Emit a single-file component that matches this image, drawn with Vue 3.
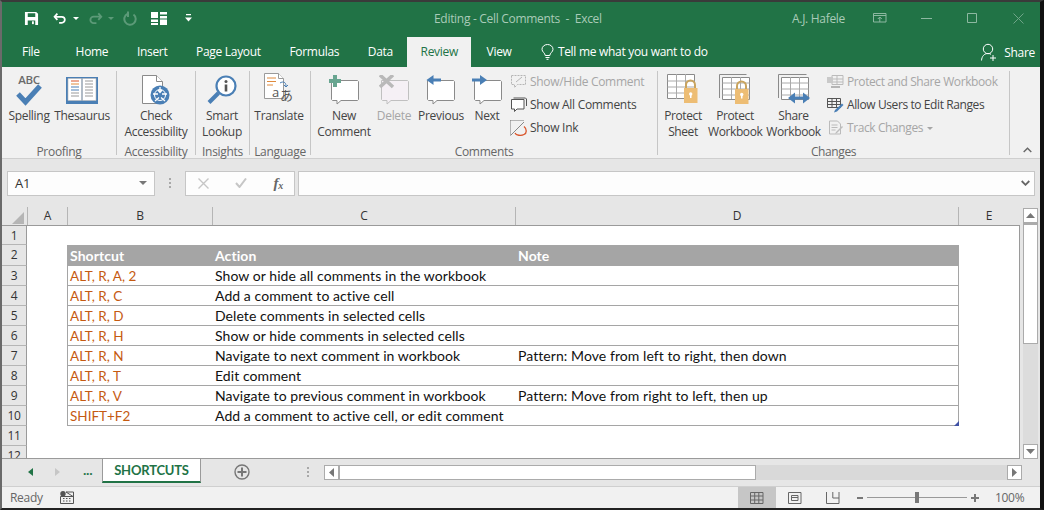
<script setup>
const columns = [
  { name: 'A', width: 40 },
  { name: 'B', width: 145 },
  { name: 'C', width: 303 },
  { name: 'D', width: 443 },
  { name: 'E', width: 61 },
]

const shortcuts = [
  { keys: 'ALT, R, A, 2', action: 'Show or hide all comments in the workbook', note: '' },
  { keys: 'ALT, R, C', action: 'Add a comment to active cell', note: '' },
  { keys: 'ALT, R, D', action: 'Delete comments in selected cells', note: '' },
  { keys: 'ALT, R, H', action: 'Show or hide comments in selected cells', note: '' },
  { keys: 'ALT, R, N', action: 'Navigate to next comment in workbook', note: 'Pattern: Move from left to right, then down' },
  { keys: 'ALT, R, T', action: 'Edit comment', note: '' },
  { keys: 'ALT, R, V', action: 'Navigate to previous comment in workbook', note: 'Pattern: Move from right to left, then up' },
  { keys: 'SHIFT+F2', action: 'Add a comment to active cell, or edit comment', note: '' },
]

const tabs = ['Home', 'Insert', 'Page Layout', 'Formulas', 'Data', 'Review', 'View']
</script>

<template>
  <div class="window">
    <header class="titlebar">
      <div class="qat">
        <svg class="q-save" width="15" height="15" viewBox="0 0 16 16"><path d="M1 1h12l2 2v12H1z" fill="#fff"/><path d="M4 2.500h8v4H4zM4 10h8v5H4z" fill="#217346"/><path d="M8.500 11h2v3h-2z" fill="#fff"/></svg>
        <svg class="q-undo" width="14" height="13" viewBox="0 0 16 14"><path d="M5 1.500 1.800 5 5 8.500" fill="none" stroke="#fff" stroke-width="2"/><path d="M2.500 5H10a3.500 3.500 0 0 1 0 7H7" fill="none" stroke="#fff" stroke-width="2"/></svg>
        <svg class="q-drop" width="6" height="3" viewBox="0 0 6 3"><path d="M0 0h6L3 3z" fill="#fff"/></svg>
        <svg class="q-redo" width="15" height="13" viewBox="0 0 16 14"><path d="M11 1.500 14.200 5 11 8.500M13.500 5H6a3.500 3.500 0 0 0 0 7h3" fill="none" stroke="#5c9a78" stroke-width="2"/></svg>
        <svg class="q-drop2" width="6" height="3" viewBox="0 0 6 3"><path d="M0 0h6L3 3z" fill="#5c9a78"/></svg>
        <svg class="q-repeat" width="14" height="15" viewBox="0 0 14 15"><path d="M10.500 3.500a5.700 5.700 0 1 1-6 -.6" fill="none" stroke="#5c9a78" stroke-width="2"/><path d="M4 .5v5.500h2V.5z" fill="#5c9a78"/></svg>
        <svg class="q-layout" width="16" height="13" viewBox="0 0 16 13"><path d="M0 0h7v6H0zM9 0h7v2.500H9zM9 4h7v2.500H9zM0 7.500h7V10H0zM0 11h7v2H0zM9 7.500h7V13H9z" fill="#fff"/></svg>
        <svg class="q-more" width="7" height="8" viewBox="0 0 7 8"><path d="M1 0h5v1.300H1zM0 3.500h7L3.500 7.500z" fill="#fff"/></svg>
      </div>
      <div class="doc-title">Editing - Cell Comments&nbsp; -&nbsp; Excel</div>
      <div class="user">A.J. Hafele</div>
      <div class="win-btns">
        <svg width="14" height="10" viewBox="0 0 14 10"><path d="M.5.500h12.500v8.500H.5zM.5 2.500h12.500M6.800 9V4M4.800 6l2-2 2 2" fill="none" stroke="#8db8a1"/></svg>
        <svg class="wb-min" width="11" height="1" viewBox="0 0 11 1"><path d="M0 0h11v1H0z" fill="#8db8a1"/></svg>
        <svg class="wb-max" width="10" height="10" viewBox="0 0 10 10"><path d="M.5.500h9v9h-9z" fill="none" stroke="#8db8a1"/></svg>
        <svg class="wb-close" width="11" height="11" viewBox="0 0 11 11"><path d="m.5.500 10 10M10.500.5l-10 10" fill="none" stroke="#6fa588"/></svg>
      </div>
    </header>

    <nav class="tabbar">
      <span class="tab file">File</span>
      <span v-for="t in tabs" :key="t" class="tab" :class="{ active: t === 'Review' }">{{ t }}</span>
      <svg class="bulb" width="13" height="16" viewBox="0 0 13 16"><path d="M4.200 11.500c0-2.500-3.200-3.500-3.200-6.200a5.500 4.800 0 0 1 11 0c0 2.700-3.200 3.700-3.200 6.200zM4.500 13.500h4M5.500 15.300h2" fill="none" stroke="#fff"/></svg>
      <span class="tell">Tell me what you want to do</span>
      <div class="share">
        <svg width="16" height="19" viewBox="0 0 16 19"><circle cx="7" cy="6" r="4.700" fill="none" stroke="#fff"/><path d="M.5 17.500c.3-4 2.500-7 6.500-7 1.300 0 2.300.3 3 .8M12 12v6M9 15h6" fill="none" stroke="#fff"/></svg>
        <span>Share</span>
      </div>
    </nav>

    <section class="ribbon">
      <div class="group" style="width: 115px">
        <div class="group-body">
          <div class="big" style="width: 48px; margin-left: 3px">
            <div class="icon">
              <svg width="30" height="35" viewBox="0 0 30 35"><text x="15" y="12" text-anchor="middle" font-family="Open Sans, sans-serif" font-size="11.500" font-weight="600" fill="#6a6a6a">ABC</text><path d="m4 22 7.500 8L26 14" fill="none" stroke="#4a7fb5" stroke-width="5"/></svg>
            </div>
            <span>Spelling</span>
          </div>
          <div class="big" style="width: 58px">
            <div class="icon">
              <svg width="32" height="28" viewBox="0 0 32 28"><path d="M0 1h32v27H0z" fill="#4a7fb5"/><path d="M2 2.500h13.500v22H2zM16.500 2.500H30v22H16.500z" fill="#fff" stroke="#b9b9b9" stroke-width=".6"/><path d="M5 5h8" stroke="#d9552b"/><path d="M5 8h8" stroke="#e08a3c"/><path d="M5 11h8" stroke="#4a7fb5"/><path d="M5 14h8" stroke="#4a7fb5"/><path d="M5 17h8M5 20h8M19 5h8M19 8h8M19 11h8M19 14h8M19 17h8M19 20h8" stroke="#9a9a9a"/></svg>
            </div>
            <span>Thesaurus</span>
          </div>
        </div>
        <div class="group-label">Proofing</div>
      </div>

      <div class="group" style="width: 79px">
        <div class="group-body">
          <div class="big" style="width: 70px; margin-left: 4px">
            <div class="icon">
              <svg width="28" height="30" viewBox="0 0 28 30"><path d="M.5.500h14l6 6v22H.5z" fill="#fff" stroke="#8a8a8a"/><path d="M14.500.5v6h6" fill="#fff" stroke="#8a8a8a"/><circle cx="18" cy="20" r="9.500" fill="#4a7fb5"/><circle cx="18" cy="20" r="5.500" fill="none" stroke="#fff"/><path d="M18 12v5M16 15l2 2.500L20 15M11 19h5M25 19h-5M13 26l4-3.500M23 26l-4-3.500" fill="none" stroke="#fff" stroke-width="1.300"/></svg>
            </div>
            <span>Check<br>Accessibility</span>
          </div>
        </div>
        <div class="group-label">Accessibility</div>
      </div>

      <div class="group" style="width: 54px">
        <div class="group-body">
          <div class="big" style="width: 52px">
            <div class="icon">
              <svg width="30" height="30" viewBox="0 0 30 30"><circle cx="19" cy="11" r="9.500" fill="#fff" stroke="#4a7fb5" stroke-width="2.200"/><path d="m11.500 18-9.500 9.500" stroke="#4a7fb5" stroke-width="4" fill="none"/><circle cx="19" cy="6.500" r="1.500" fill="#555"/><path d="M17.700 9.500h2.600v7h-2.600z" fill="#555"/></svg>
            </div>
            <span>Smart<br>Lookup</span>
          </div>
        </div>
        <div class="group-label">Insights</div>
      </div>

      <div class="group" style="width: 61px">
        <div class="group-body">
          <div class="big" style="width: 58px">
            <div class="icon">
              <svg width="31" height="34" viewBox="0 0 31 34"><path d="M.5.500h14l5 5v20H.5z" fill="#fff" stroke="#9a9a9a"/><path d="M14.500.5v5h5" fill="#fff" stroke="#9a9a9a"/><path d="M3 5h9M3 8.500h9" stroke="#e08a3c"/><path d="M3 12h6" stroke="#e08a3c"/><path d="M16 10c3-2 6-1 6 3m-2-1 2 2 2-2" fill="none" stroke="#4a7fb5"/><text x="8" y="24" font-family="Open Sans, sans-serif" font-size="13" fill="#555">a</text><text x="16" y="27" font-family="Noto Sans CJK JP, sans-serif" font-size="13" fill="#555">あ</text></svg>
            </div>
            <span>Translate</span>
          </div>
        </div>
        <div class="group-label">Language</div>
      </div>

      <div class="group" style="width: 347px">
        <div class="group-body">
          <div class="big" style="width: 58px; margin-left: 4px">
            <div class="icon">
              <svg width="30" height="30" viewBox="0 0 30 30"><path d="M2.500 5.500h26l1 1v18l-1 1H12l-4 3.500v-3.500H3.500l-1-1z" fill="#fff" stroke="#8a8a8a"/><path d="M4 0h4v4h4v4H8v4H4V8H0V4h4z" fill="#68a590"/></svg>
            </div>
            <span>New<br>Comment</span>
          </div>
          <div class="big" style="width: 42px">
            <div class="icon">
              <svg width="31" height="30" viewBox="0 0 31 30"><path d="M2.500 5.500h26l1 1v18l-1 1H12l-4 3.500v-3.500H3.500l-1-1z" fill="#f5f0f5" stroke="#c0c0c0"/><path d="m1 0 13 12M14 0 1 12" stroke="#b9b9b9" stroke-width="3.500"/></svg>
            </div>
            <span class="off">Delete</span>
          </div>
          <div class="big" style="width: 52px">
            <div class="icon">
              <svg width="30" height="30" viewBox="0 0 30 30"><path d="M1.500 5.500h26l1 1v18l-1 1H11l-4 3.500v-3.500H2.500l-1-1z" fill="#fff" stroke="#8a8a8a"/><path d="M15 5H6" stroke="#4a7fb5" stroke-width="3"/><path d="m7.500 0-7 5 7 5z" fill="#4a7fb5"/></svg>
            </div>
            <span>Previous</span>
          </div>
          <div class="big" style="width: 40px">
            <div class="icon">
              <svg width="31" height="30" viewBox="0 0 31 30"><path d="M2.500 5.500h26l1 1v18l-1 1H12l-4 3.500v-3.500H3.500l-1-1z" fill="#fff" stroke="#8a8a8a"/><path d="M0 5h10" stroke="#4a7fb5" stroke-width="3"/><path d="m8 0 7 5-7 5z" fill="#4a7fb5"/></svg>
            </div>
            <span>Next</span>
          </div>
          <div class="smalls" style="margin-left: 3px">
            <div class="small off">
              <svg width="17" height="16" viewBox="0 0 17 16"><path d="M1.500 1.500h14v9h-8l-3 3v-3h-3z" fill="none" stroke="#b5b5b5" stroke-dasharray="2 1"/><path d="m6 8 6-5" stroke="#b5b5b5"/></svg>
              <span>Show/Hide Comment</span>
            </div>
            <div class="small">
              <svg width="17" height="16" viewBox="0 0 17 16"><path d="M3.500 1h12l1 1v7" fill="none" stroke="#555"/><path d="M1.500 2.500h12.500v9.500H7l-2.500 2.500V12h-3z" fill="#fff" stroke="#555"/></svg>
              <span>Show All Comments</span>
            </div>
            <div class="small">
              <svg width="17" height="16" viewBox="0 0 17 16"><path d="M.5.500h14M.5.500v15" fill="none" stroke="#777" stroke-dasharray="1 1"/><path d="m1 15 13-13" stroke="#888"/><path d="M5 13c1 2.500 6 3 9 1.500s3-5.500 0-8" fill="none" stroke="#d9552b" stroke-width="1.300"/></svg>
              <span>Show Ink</span>
            </div>
          </div>
        </div>
        <div class="group-label">Comments</div>
      </div>

      <div class="group tight" style="width: 352px">
        <div class="group-body">
          <div class="big" style="width: 50px">
            <div class="icon">
              <svg width="32" height="31" viewBox="0 0 32 31"><path d="M.5.500h27v24H.5z" fill="#fff" stroke="#8a8a8a"/><path d="M.5 7h27M.5 13h27M.5 19h27M9.500 0v25M18.500 0v25" stroke="#aaa" fill="none"/><path d="M19 14v-3a4.500 4.500 0 0 1 9 0v3" fill="none" stroke="#c9a45e" stroke-width="2"/><path d="M17 14h13.500v15H17z" fill="#edbd74"/><circle cx="23.700" cy="20" r="1.700" fill="#fff"/><path d="M23 20h1.500v4H23z" fill="#fff"/></svg>
            </div>
            <span>Protect<br>Sheet</span>
          </div>
          <div class="big" style="width: 54px">
            <div class="icon">
              <svg width="32" height="31" viewBox="0 0 32 31"><path d="M.5 24V.5h27" fill="none" stroke="#8a8a8a"/><path d="M3.500 3.500h27v22h-27z" fill="#fff" stroke="#8a8a8a"/><path d="M3.500 9h27M3.500 15h27M3.500 21h27M12.500 3v22M21.500 3v22" stroke="#aaa" fill="none"/><path d="M18 15v-3a4.500 4.500 0 0 1 9 0v3" fill="none" stroke="#c9a45e" stroke-width="2"/><path d="M16 15h13.500v15H16z" fill="#edbd74"/><circle cx="22.700" cy="20.500" r="1.700" fill="#fff"/><path d="M22 20.500h1.500v4H22z" fill="#fff"/></svg>
            </div>
            <span>Protect<br>Workbook</span>
          </div>
          <div class="big" style="width: 63px">
            <div class="icon">
              <svg width="32" height="31" viewBox="0 0 32 31"><path d="M.5 24V.5h28" fill="none" stroke="#8a8a8a"/><path d="M3.500 3.500h27v22h-27z" fill="#fff" stroke="#8a8a8a"/><path d="M3.500 9h27M3.500 15h27M3.500 21h27M12.500 3v22M21.500 3v22" stroke="#aaa" fill="none"/><path d="M15 24h13" stroke="#4a7fb5" stroke-width="3"/><path d="m18 19-7 5.500 7 5.500zM26 19l7 5.500-7 5.500z" fill="#4a7fb5" transform="translate(-1 -.5)"/></svg>
            </div>
            <span>Share<br>Workbook</span>
          </div>
          <div class="smalls" style="margin-left: 2px">
            <div class="small off">
              <svg width="17" height="16" viewBox="0 0 17 16"><path d="M5 1.500h11v9H5zM5 5h11M5 8h11M10 1v9" fill="none" stroke="#bbb"/><path d="M0 3h6v6H0z" fill="#c9c9c9"/><path d="M4 13h9" stroke="#b5b5b5" stroke-width="2"/></svg>
              <span>Protect and Share Workbook</span>
            </div>
            <div class="small">
              <svg width="17" height="16" viewBox="0 0 17 16"><path d="M.5 1.500h13v9H.5zM.5 4.500h13M.5 7.500h13M5 1v9M9.500 1v9" fill="none" stroke="#555"/><path d="M15 6.500 8 13l-1 2.500L10 14.500l6.500-6.500z" fill="#4a7fb5"/></svg>
              <span>Allow Users to Edit Ranges</span>
            </div>
            <div class="small off">
              <svg width="17" height="16" viewBox="0 0 17 16"><path d="M2.500 1h8l3 3v10h-11zM4.500 5h6M4.500 7.500h6M4.500 10h4" fill="none" stroke="#bbb"/><path d="m15 6-6 6-1 2 2-1 6-6z" fill="#bdbdbd"/></svg>
              <span>Track Changes <i class="caret"></i></span>
            </div>
          </div>
        </div>
        <div class="group-label">Changes</div>
      </div>

      <svg class="collapse" width="9" height="6" viewBox="0 0 9 6"><path d="m.7 5 3.800-3.800L8.300 5" fill="none" stroke="#666" stroke-width="1.400"/></svg>
    </section>

    <section class="formula">
      <div class="namebox">
        <span>A1</span>
        <svg width="8" height="4" viewBox="0 0 8 4"><path d="M0 0h8L4 4z" fill="#777"/></svg>
      </div>
      <div class="grip"><i></i><i></i><i></i></div>
      <div class="fx-box">
        <svg width="11" height="11" viewBox="0 0 11 11"><path d="m.5.500 10 10M10.500.5l-10 10" stroke="#c6c6c6" stroke-width="1.400"/></svg>
        <svg width="12" height="10" viewBox="0 0 12 10"><path d="m1 5 3.500 4L11 .5" fill="none" stroke="#c6c6c6" stroke-width="2"/></svg>
        <span class="fx">f<sub>x</sub></span>
      </div>
      <div class="input">
        <svg width="9" height="6" viewBox="0 0 9 6"><path d="m.7 1 3.800 3.800L8.300 1" fill="none" stroke="#666" stroke-width="1.800"/></svg>
      </div>
    </section>

    <section class="sheet-wrap">
      <div class="sheet">
        <div class="col-heads">
          <div class="corner"><i></i></div>
          <div v-for="c in columns" :key="c.name" class="col-head" :style="{ width: c.width + 'px' }">{{ c.name }}</div>
        </div>
        <div class="body">
          <div class="row first">
            <div class="row-head">1</div>
          </div>
          <div class="row second">
            <div class="row-head">2</div>
            <div class="c-a"></div>
            <div class="c-table head">
              <div class="c-b">Shortcut</div>
              <div class="c-c">Action</div>
              <div class="c-d">Note</div>
            </div>
          </div>
          <div v-for="(s, i) in shortcuts" :key="s.keys" class="row">
            <div class="row-head">{{ i + 3 }}</div>
            <div class="c-a"></div>
            <div class="c-table">
              <div class="c-b keys">{{ s.keys }}</div>
              <div class="c-c">{{ s.action }}</div>
              <div class="c-d">{{ s.note }}</div>
              <i v-if="i === shortcuts.length - 1" class="handle"></i>
            </div>
          </div>
          <div class="row">
            <div class="row-head">11</div>
          </div>
          <div class="row">
            <div class="row-head">12</div>
          </div>
        </div>
      </div>
      <div class="vscroll">
        <div class="sb-btn"><svg width="9" height="5" viewBox="0 0 9 5"><path d="M4.500 0 9 5H0z" fill="#777"/></svg></div>
        <div class="v-thumb"></div>
        <div class="sb-btn bottom"><svg width="9" height="5" viewBox="0 0 9 5"><path d="M4.500 5 9 0H0z" fill="#777"/></svg></div>
      </div>
    </section>

    <section class="sheetbar">
      <svg class="nav-l" width="5" height="8" viewBox="0 0 5 8"><path d="M5 0v8L0 4z" fill="#217346"/></svg>
      <svg class="nav-r" width="5" height="8" viewBox="0 0 5 8"><path d="M0 0v8l5-4z" fill="#c6c6c6"/></svg>
      <span class="ellipsis">...</span>
      <div class="sheet-tab">SHORTCUTS</div>
      <svg class="add" width="16" height="16" viewBox="0 0 16 16"><circle cx="8" cy="8" r="7" fill="none" stroke="#777" stroke-width="1.400"/><path d="M8 3.500v9M3.500 8h9" stroke="#777" stroke-width="2"/></svg>
      <div class="grip tab-grip"><i></i><i></i><i></i></div>
      <div class="hscroll">
        <div class="sb-btn h"><svg width="5" height="9" viewBox="0 0 5 9"><path d="M0 4.500 5 0v9z" fill="#777"/></svg></div>
        <div class="h-thumb"></div>
        <div class="sb-btn h end"><svg width="5" height="9" viewBox="0 0 5 9"><path d="M5 4.500 0 0v9z" fill="#777"/></svg></div>
      </div>
    </section>

    <footer class="status">
      <span class="ready">Ready</span>
      <svg class="macro" width="14" height="13" viewBox="0 0 14 13"><circle cx="3" cy="2.700" r="2.700" fill="#555"/><path d="M6 1h7.500v11.500H.5V5.500H13z" fill="none" stroke="#555"/><path d="M3 7.500h1.500M6 7.500h1.500M9 7.500h1.500M3 10h1.500M6 10h1.500M9 10h1.500" stroke="#555"/></svg>
      <div class="views">
        <div class="view on"><svg width="14" height="12" viewBox="0 0 14 12"><path d="M.5.500h12.500v11H.5zM.5 4h12.500M.5 8h12.500M4.700 0v12M8.800 0v12" fill="none" stroke="#666"/></svg></div>
        <div class="view"><svg width="14" height="12" viewBox="0 0 14 12"><path d="M.5.500h12.500v11H.5zM3.500 3.500h6.500v5H3.500zM3.500 5.500h6.500" fill="none" stroke="#666"/></svg></div>
        <div class="view"><svg width="14" height="12" viewBox="0 0 14 12"><path d="M.5 0v11.500h12.500V0M6.800 0v6h6.200" fill="none" stroke="#666"/></svg></div>
      </div>
      <div class="zoom">
        <i class="z-minus"></i>
        <div class="z-track"><i></i></div>
        <i class="z-plus"></i>
        <span>100%</span>
      </div>
    </footer>
  </div>
</template>

<style scoped>
.window {
  width: 1044px;
  height: 510px;
  box-sizing: border-box;
  border-top: 2px solid #3a3a3a;
  border-left: 2px solid #6a6a6a;
  border-right: 4px solid #111;
  border-bottom: 2px solid #222;
  display: flex;
  flex-direction: column;
  overflow: hidden;
  font-family: "Open Sans", "Noto Sans", sans-serif;
  font-size: 12px;
  letter-spacing: -0.3px;
  color: #444;
  background: #f1f1f1;
}

.titlebar {
  height: 32px;
  flex: none;
  background: #217346;
  display: flex;
  align-items: center;
  color: #a9cbb8;
}
.qat {
  width: 430px;
  display: flex;
  align-items: center;
  flex: none;
}
.q-save { margin-left: 22px; }
.q-undo { margin-left: 14px; }
.q-drop { margin-left: 6px; }
.q-redo { margin-left: 9px; }
.q-drop2 { margin-left: 5px; }
.q-repeat { margin-left: 9px; }
.q-layout { margin-left: 14px; }
.q-more { margin-left: 18px; }
.doc-title { width: 360px; flex: none; padding-left: 2px; box-sizing: border-box; }
.user { width: 81px; flex: none; }
.win-btns {
  display: flex;
  align-items: center;
}
.wb-min { margin-left: 34px; }
.wb-max { margin-left: 35px; }
.wb-close { margin-left: 36px; }

.tabbar {
  height: 33px;
  flex: none;
  background: #217346;
  display: flex;
  align-items: flex-end;
  color: #fff;
}
.tab {
  height: 30px;
  line-height: 30px;
  padding: 0 14.300px;
  box-sizing: border-box;
}
.tab.file { padding: 0 21.500px 0 20px; }
.tab.active {
  background: #f1f1f1;
  color: #217346;
  width: 64px;
  padding: 0;
  text-align: center;
  margin-right: 1px;
}
.bulb { margin: 0 4px 7px 15px; }
.tell { line-height: 30px; }
.share {
  margin-left: auto;
  margin-right: 5px;
  height: 30px;
  display: flex;
  align-items: center;
  gap: 7px;
}

.ribbon {
  height: 92px;
  flex: none;
  display: flex;
  box-sizing: border-box;
  border-bottom: 1px solid #cfcfcf;
  padding-top: 4px;
  position: relative;
}
.group {
  flex: none;
  height: 84px;
  box-sizing: border-box;
  border-right: 1px solid #c6c6c6;
  display: flex;
  flex-direction: column;
}
.group.tight { letter-spacing: -0.4px; }
.group-body {
  flex: none;
  height: 73px;
  display: flex;
}
.group-label {
  flex: none;
  height: 15px;
  line-height: 15px;
  text-align: center;
  color: #666;
  white-space: nowrap;
}
.big {
  flex: none;
  text-align: center;
  line-height: 16px;
  white-space: nowrap;
}
.icon {
  height: 37px;
  display: flex;
  justify-content: center;
  align-items: center;
}
.off, .small.off span { color: #a6a6a6; }
.smalls {
  display: flex;
  flex-direction: column;
  margin-top: -1px;
}
.small {
  height: 23px;
  display: flex;
  align-items: center;
  gap: 3px;
  white-space: nowrap;
}
.caret {
  display: inline-block;
  border: 3px solid transparent;
  border-top-color: #a6a6a6;
  border-bottom: 0;
  vertical-align: middle;
  margin-left: 1px;
}
.collapse {
  position: absolute;
  right: 8px;
  bottom: 5px;
}

.formula {
  height: 48px;
  flex: none;
  background: #e6e6e6;
  display: flex;
  align-items: center;
  padding: 0 5px;
  box-sizing: border-box;
}
.namebox, .fx-box, .input {
  height: 25px;
  box-sizing: border-box;
  background: #fdfdfd;
  border: 1px solid #c6c6c6;
  display: flex;
  align-items: center;
}
.namebox {
  width: 148px;
  padding: 0 7px;
  justify-content: space-between;
  color: #333;
  font-size: 13px;
}
.grip {
  display: flex;
  flex-direction: column;
  gap: 2px;
  width: 30px;
  align-items: center;
}
.grip i {
  width: 2px;
  height: 2px;
  background: #a8a8a8;
}
.fx-box {
  width: 110px;
  padding: 0 11px 0 12px;
  justify-content: space-between;
}
.fx {
  font-family: "Liberation Serif", serif;
  font-style: italic;
  font-weight: 700;
  font-size: 15px;
  color: #666;
}
.fx sub { font-size: 10px; vertical-align: -1px; line-height: 0; }
.input {
  flex: 1;
  margin-left: 3px;
  justify-content: flex-end;
  padding-right: 4px;
}

.sheet-wrap {
  height: 252px;
  flex: none;
  display: flex;
  background: #e6e6e6;
}
.sheet {
  width: 1018px;
  flex: none;
  display: flex;
  flex-direction: column;
  overflow: hidden;
}
.col-heads {
  height: 19px;
  flex: none;
  display: flex;
  color: #333;
  box-sizing: border-box;
  border-bottom: 1px solid #9a9a9a;
}
.corner {
  width: 25px;
  flex: none;
  position: relative;
}
.corner i {
  position: absolute;
  right: 3px;
  bottom: 1px;
  border-style: solid;
  border-width: 0 0 12px 12px;
  border-color: transparent transparent #b5b5b5 transparent;
}
.col-head {
  flex: none;
  box-sizing: border-box;
  text-align: center;
  line-height: 18px;
  border-left: 1px solid #b5b5b5;
}
.body {
  flex: 1;
  min-height: 0;
  background: #fff;
  border-right: 1px solid #9a9a9a;
  border-bottom: 1px solid #9a9a9a;
  font-family: Lato, sans-serif;
  font-size: 14px;
  letter-spacing: 0.07px;
  color: #111;
  overflow: hidden;
}
.row {
  height: 20px;
  display: flex;
}
.row.first { height: 19px; }
.row.second { height: 21px; }
.row-head {
  width: 25px;
  flex: none;
  box-sizing: border-box;
  background: #e6e6e6;
  border-right: 1px solid #9a9a9a;
  border-bottom: 1px solid #b5b5b5;
  text-align: center;
  line-height: 20px;
  font-family: "Open Sans", sans-serif;
  font-size: 12px;
  letter-spacing: -0.25px;
  color: #333;
}
.c-a { width: 40px; flex: none; }
.c-table {
  width: 892px;
  flex: none;
  display: flex;
  box-sizing: border-box;
  border: solid #a5a5a5;
  border-width: 0 1px 1px 1px;
  line-height: 20px;
  position: relative;
}
.c-table.head {
  background: #a5a5a5;
  color: #fff;
  font-weight: 700;
  line-height: 21px;
}
.c-b { width: 144px; flex: none; padding-left: 2px; box-sizing: border-box; }
.c-c { width: 303px; flex: none; padding-left: 3px; box-sizing: border-box; white-space: nowrap; }
.c-d { flex: 1; padding-left: 3px; box-sizing: border-box; white-space: nowrap; }
.keys { color: #c55a11; font-size: 13.500px; letter-spacing: 0; }
.handle {
  position: absolute;
  right: -1px;
  bottom: -1px;
  border-style: solid;
  border-width: 0 0 5px 5px;
  border-color: transparent transparent #3f51a5 transparent;
}

.vscroll {
  width: 15px;
  flex: none;
  margin: 1px 0 0 3px;
  display: flex;
  flex-direction: column;
  background: #dcdcdc;
}
.sb-btn {
  height: 15px;
  flex: none;
  box-sizing: border-box;
  background: #fff;
  border: 1px solid #ababab;
  display: flex;
  align-items: center;
  justify-content: center;
}
.sb-btn.bottom { margin-top: auto; }
.v-thumb {
  height: 121px;
  flex: none;
  background: #fff;
  border: solid #ababab;
  border-width: 2px 1px 1px;
  box-sizing: border-box;
}

.sheetbar {
  height: 28px;
  flex: none;
  background: #e6e6e6;
  display: flex;
  align-items: flex-start;
  box-sizing: border-box;
  border-bottom: 1px solid #cfcfcf;
}
.nav-l { margin: 9px 0 0 26px; }
.nav-r { margin: 9px 0 0 22px; }
.ellipsis {
  margin-left: 23px;
  width: 19px;
  color: #217346;
  font-weight: 700;
  line-height: 24px;
}
.sheet-tab {
  width: 99px;
  height: 24px;
  box-sizing: border-box;
  background: #fff;
  border: solid #9a9a9a;
  border-width: 0 1px;
  border-bottom: 2px solid #217346;
  color: #217346;
  font-family: Lato, sans-serif;
  font-weight: 700;
  font-size: 13px;
  letter-spacing: -0.2px;
  text-align: center;
  line-height: 23px;
}
.add { margin: 5px 0 0 33px; }
.tab-grip { width: 10px; margin: 8px 0 0 53px; }
.hscroll {
  width: 698px;
  height: 15px;
  margin: 6px 0 0 11px;
  display: flex;
  background: #d9d9d9;
}
.sb-btn.h { width: 15px; }
.sb-btn.end { margin-left: auto; }
.h-thumb {
  width: 417px;
  height: 15px;
  box-sizing: border-box;
  background: #fff;
  border: 1px solid #ababab;
}

.status {
  height: 21px;
  flex: none;
  display: flex;
  align-items: center;
  background: #f1f1f1;
  color: #666;
}
.ready { margin-left: 8px; width: 50px; flex: none; }
.macro { flex: none; }
.views {
  margin-left: 664px;
  display: flex;
  align-self: stretch;
}
.view {
  width: 38px;
  display: flex;
  align-items: center;
  justify-content: center;
}
.view.on { background: #c6c6c6; }
.zoom {
  display: flex;
  align-items: center;
  margin-left: 5px;
}
.zoom span { margin-left: 16px; }
.z-minus { width: 6px; height: 2px; background: #777; }
.z-plus {
  width: 8px;
  height: 2px;
  background: #777;
  position: relative;
}
.z-plus::after {
  content: "";
  position: absolute;
  left: 3px;
  top: -3px;
  width: 2px;
  height: 8px;
  background: #777;
}
.z-track {
  width: 100px;
  height: 1px;
  background: #999;
  margin: 0 4px;
  position: relative;
}
.z-track i {
  position: absolute;
  left: 48px;
  top: -5px;
  width: 4px;
  height: 11px;
  background: #777;
}
</style>
